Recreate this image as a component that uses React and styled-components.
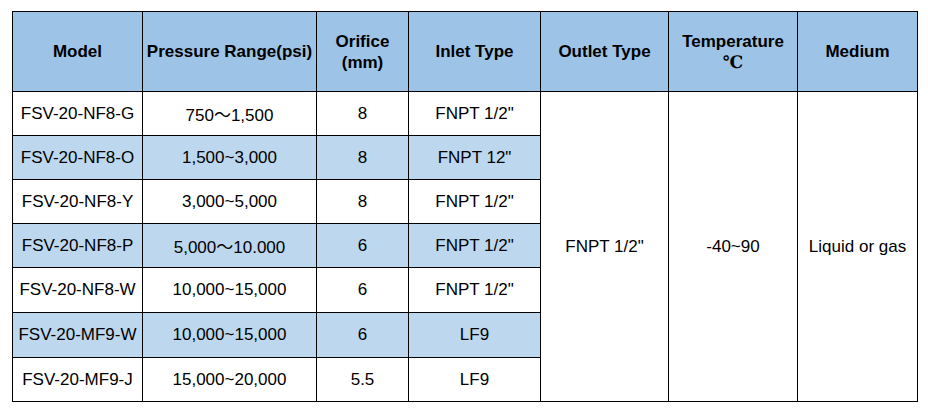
import React from "react";
import styled, { createGlobalStyle } from "styled-components";

const Global = createGlobalStyle`
  html, body { margin: 0; padding: 0; background: #ffffff; }
  body { font-family: "Liberation Sans", Arial, "Noto Sans CJK SC", sans-serif; color: #000; }
`;

const Page = styled.div`
  padding: 11px 0 0 12px;
`;

const Table = styled.table`
  border-collapse: collapse;
  table-layout: fixed;
  width: 905px;
  font-size: 17px;
  font-family: "Liberation Sans", Arial, "Noto Sans CJK SC", sans-serif;
`;

const HeadRow = styled.tr`
  height: 80px;
`;

const BodyRow = styled.tr`
  height: ${(p) => p.$h}px;
`;

const Th = styled.th`
  border: 1px solid #000;
  background: #9dc3e6;
  font-weight: bold;
  text-align: center;
  vertical-align: middle;
  line-height: 21px;
  padding: 0;
  color: #000;
`;

const Td = styled.td`
  border: 1px solid #000;
  background: ${(p) => (p.$striped ? "#bdd7ee" : "#ffffff")};
  text-align: center;
  vertical-align: middle;
  padding: 0;
  white-space: nowrap;
  color: #000;
`;

const Celsius = styled.span`
  display: block;
  font-family: "DejaVu Serif", "Noto Sans CJK SC", serif;
  font-weight: bold;
  font-size: 17px;
  line-height: 21px;
  color: #000;
`;

const widths = [130, 174, 92, 132, 128, 129, 120];

const rows = [
  ["FSV-20-NF8-G", "750～1,500", "8", 'FNPT 1/2"'],
  ["FSV-20-NF8-O", "1,500~3,000", "8", 'FNPT 12"'],
  ["FSV-20-NF8-Y", "3,000~5,000", "8", 'FNPT 1/2"'],
  ["FSV-20-NF8-P", "5,000～10.000", "6", 'FNPT 1/2"'],
  ["FSV-20-NF8-W", "10,000~15,000", "6", 'FNPT 1/2"'],
  ["FSV-20-MF9-W", "10,000~15,000", "6", "LF9"],
  ["FSV-20-MF9-J", "15,000~20,000", "5.5", "LF9"],
];

const heights = [44, 44, 44, 44, 45, 45, 44];

export default function App() {
  return (
    <Page>
      <Global />
      <Table>
        <colgroup>
          {widths.map((w, i) => (
            <col key={i} style={{ width: w }} />
          ))}
        </colgroup>
        <thead>
          <HeadRow>
            <Th>Model</Th>
            <Th>Pressure Range(psi)</Th>
            <Th>
              Orifice
              <br />
              (mm)
            </Th>
            <Th>Inlet Type</Th>
            <Th>Outlet Type</Th>
            <Th>
              Temperature
              <Celsius>℃</Celsius>
            </Th>
            <Th>Medium</Th>
          </HeadRow>
        </thead>
        <tbody>
          {rows.map((r, i) => (
            <BodyRow key={i} $h={heights[i]}>
              {r.map((c, j) => (
                <Td key={j} $striped={i % 2 === 1}>
                  {c}
                </Td>
              ))}
              {i === 0 && (
                <>
                  <Td rowSpan={7}>FNPT 1/2"</Td>
                  <Td rowSpan={7}>-40~90</Td>
                  <Td rowSpan={7}>Liquid or gas</Td>
                </>
              )}
            </BodyRow>
          ))}
        </tbody>
      </Table>
    </Page>
  );
}
